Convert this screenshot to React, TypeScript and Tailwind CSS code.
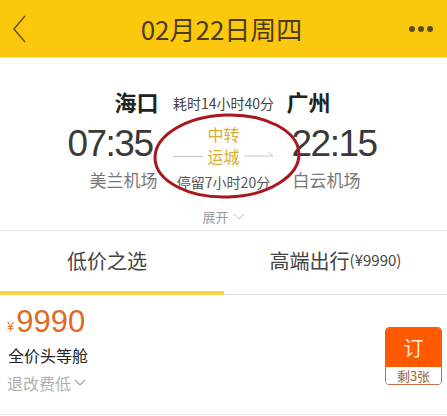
import React from "react";

const font = { fontFamily: '"Noto Sans CJK SC", "Liberation Sans", sans-serif' };
const latin = { fontFamily: '"Liberation Sans", sans-serif' };

export default function App() {
  return (
    <div className="w-[447px] h-[416px] overflow-hidden bg-white" style={font}>
      {/* Header */}
      <div className="h-[58px] bg-[#fcc80e] flex items-center justify-between px-[8px] border-b border-[#f0e6b8]">
        <svg width="18" height="32" viewBox="0 0 18 32" className="ml-[2px]">
          <path d="M15 3 L4 16 L15 29" fill="none" stroke="#6b5a2a" strokeWidth="1.6" />
        </svg>
        <div className="text-[26px] text-[#4a3d1e] leading-none ml-[6px]">02月22日周四</div>
        <div className="flex gap-[3px] mr-[6px]">
          <span className="w-[6px] h-[6px] rounded-full bg-[#5a4a20]" />
          <span className="w-[6px] h-[6px] rounded-full bg-[#5a4a20]" />
          <span className="w-[6px] h-[6px] rounded-full bg-[#5a4a20]" />
        </div>
      </div>

      {/* Flight info */}
      <div className="relative h-[173px] border-b border-[#e4e4e4] flex flex-col items-center">
        <div className="flex items-end mt-[32px] leading-none">
          <span className="text-[22px] font-bold text-[#222] w-[108px] text-right pr-[2px]">海口</span>
          <span className="text-[14px] text-[#444] w-[126px] text-center pb-[2px]">耗时14小时40分</span>
          <span className="text-[22px] font-bold text-[#222] w-[108px]">广州</span>
        </div>
        <div className="flex items-center mt-[11px]">
          <div className="w-[130px] flex flex-col items-end">
            <span className="text-[37px] text-[#3a3a3a] leading-none tracking-[-1.5px] mr-[1px]" style={latin}>07:35</span>
            <span className="text-[17px] text-[#777] leading-none mt-[9px] mr-[-4px]">美兰机场</span>
          </div>
          <div className="w-[140px] flex flex-col items-center">
            <span className="text-[16px] text-[#d8ae2e] leading-[22px]">中转</span>
            <div className="flex items-center">
              <span className="w-[30px] h-px bg-[#c8c8c8]" />
              <span className="text-[16px] text-[#d8ae2e] leading-[22px] px-[4px]">运城</span>
              <svg width="30" height="10" viewBox="0 0 30 10">
                <path d="M0 5 H29 M24 1 L29 5" fill="none" stroke="#c8c8c8" strokeWidth="1" />
              </svg>
            </div>
            <span className="text-[14px] text-[#555] leading-none mt-[8px]">停留7小时20分</span>
          </div>
          <div className="w-[130px] flex flex-col items-start">
            <span className="text-[37px] text-[#3a3a3a] leading-none tracking-[-1.5px] ml-[-2px]" style={latin}>22:15</span>
            <span className="text-[17px] text-[#777] leading-none mt-[9px] ml-[-1px]">白云机场</span>
          </div>
        </div>
        <div className="flex items-center mt-[21px] text-[13px] text-[#999] leading-none">
          展开
          <svg width="12" height="8" viewBox="0 0 12 8" className="ml-[4px]">
            <path d="M1 1 L6 6 L11 1" fill="none" stroke="#bbb" strokeWidth="1" />
          </svg>
        </div>
        {/* red circle annotation */}
        <svg className="absolute left-[152px] top-[53px]" width="152" height="90" viewBox="0 0 152 90">
          <ellipse cx="75" cy="45" rx="72" ry="41" fill="none" stroke="#a8181f" strokeWidth="3" transform="rotate(-2 75 45)" />
        </svg>
      </div>

      {/* Tabs */}
      <div className="h-[64px] flex border-b border-[#dcdcdc] relative">
        <div className="w-[224px] flex items-center justify-center text-[20px] text-[#444] pb-[4px] pr-[10px]">低价之选</div>
        <div className="flex-1 flex items-center justify-center text-[20px] text-[#444] pb-[4px]">
          高端出行<span className="text-[15px]">(¥9990)</span>
        </div>
        <div className="absolute left-0 bottom-[-1px] w-[224px] h-[4px] bg-[#f2d64a]" />
      </div>

      {/* Fare row */}
      <div className="h-[120px] flex justify-between border-b border-[#e8e8e8]">
        <div className="pl-[7px] pt-[11px]">
          <div className="flex items-end text-[#e06a22] leading-none">
            <span className="text-[13px] mb-[5px] mr-[2px]">¥</span>
            <span className="text-[31px]" style={latin}>9990</span>
          </div>
          <div className="text-[16px] text-[#222] mt-[10px] leading-none pl-[1px]">全价头等舱</div>
          <div className="flex items-center text-[16px] text-[#b0b0b0] mt-[12px] leading-none">
            退改费低
            <svg width="12" height="8" viewBox="0 0 12 8" className="ml-[3px]">
              <path d="M1 1 L6 6 L11 1" fill="none" stroke="#b0b0b0" strokeWidth="1.5" />
            </svg>
          </div>
        </div>
        <div className="mr-[5px] mt-[32px] w-[57px] h-[58px] rounded-[4px] border-[1.5px] border-[#c07048] overflow-hidden flex flex-col">
          <div className="flex-1 bg-[#ff5a00] flex items-center justify-center text-[20px] text-[#fde7d6] leading-none">订</div>
          <div className="h-[17px] bg-white flex items-center justify-center text-[13px] text-[#a0603a] leading-none">剩3张</div>
        </div>
      </div>
    </div>
  );
}
